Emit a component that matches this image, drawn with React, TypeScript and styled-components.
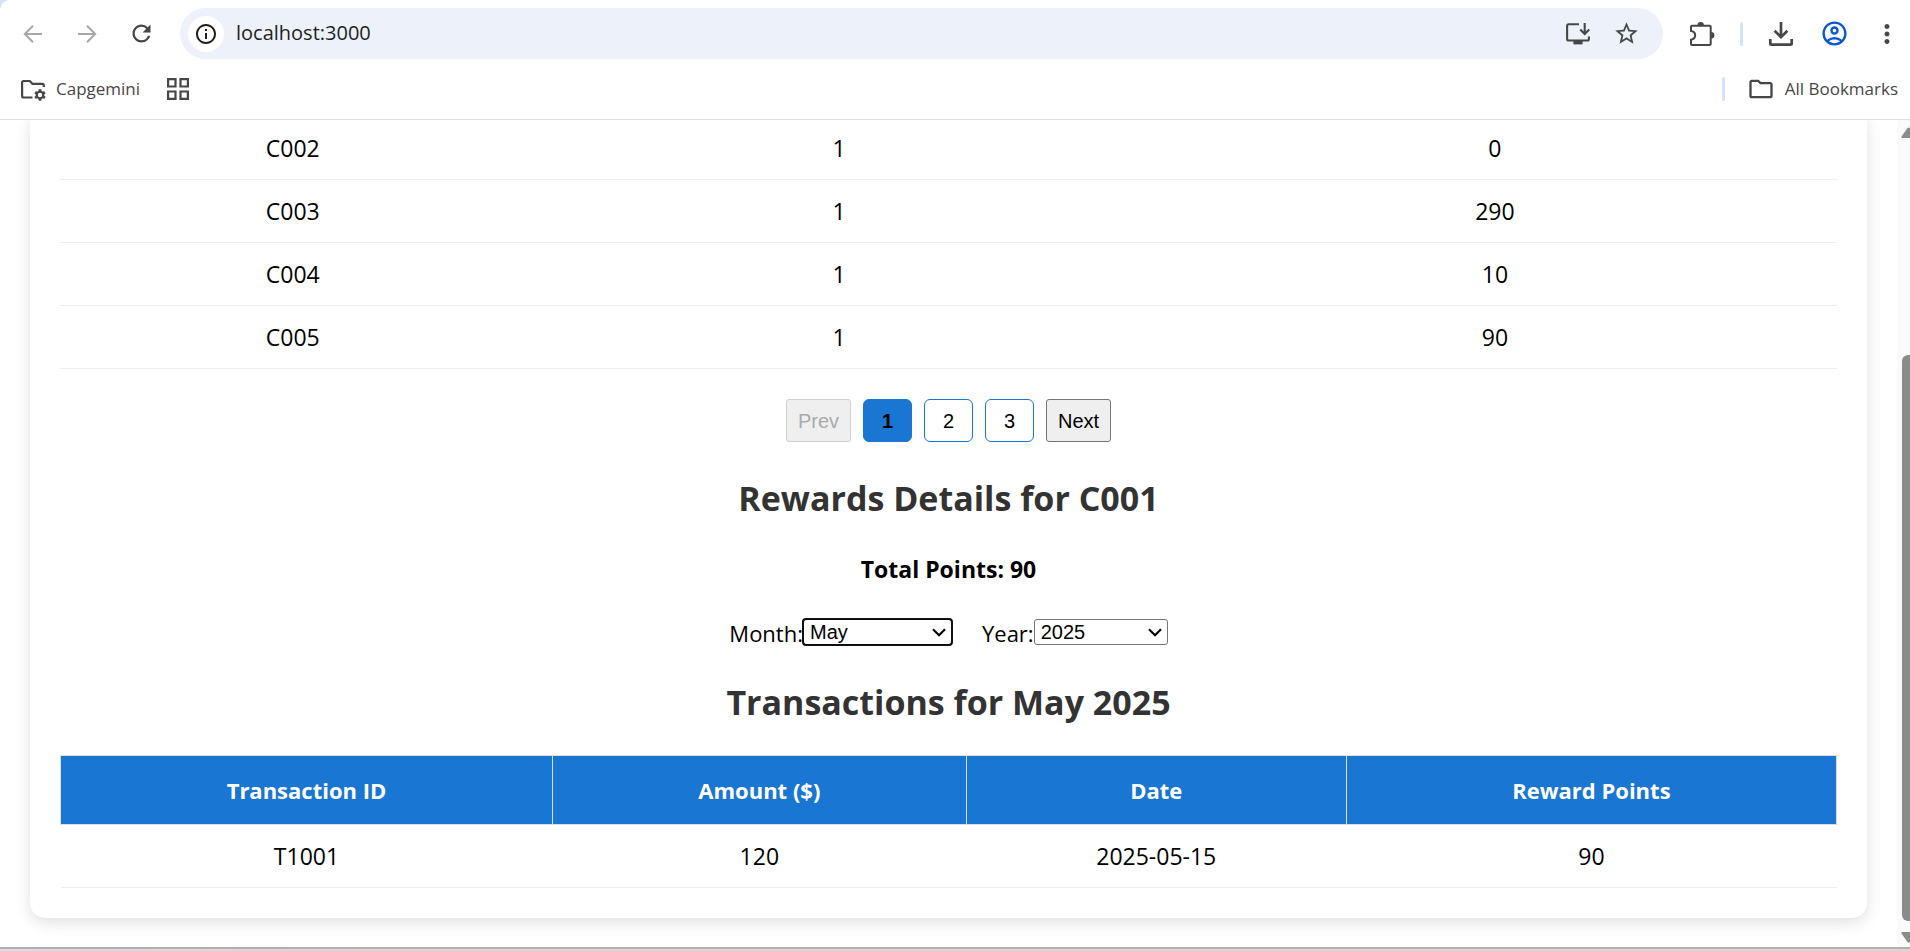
import React, { useState } from "react";
import styled, { createGlobalStyle } from "styled-components";
import {
  MdInfoOutline,
  MdMoreVert,
  MdOutlineAccountCircle,
  MdOutlineFolder,
  MdRefresh,
  MdStarBorder,
} from "react-icons/md";

const GlobalStyle = createGlobalStyle`
  *, *::before, *::after { box-sizing: border-box; }
  body {
    margin: 0;
    background: #d3e3fd;
    color: #000;
    font-family: "Open Sans", "Noto Sans", sans-serif;
    font-size: 23px;
    line-height: 32px;
  }
`;

const Window = styled.div`
  display: flex;
  flex-direction: column;
  height: 100vh;
  overflow: hidden;
`;

const Chrome = styled.header`
  flex: none;
  background: #fff;
  border-bottom: 1px solid #dfe0e2;
  border-top-left-radius: 10px;
  padding-bottom: 8px;
`;

const Toolbar = styled.div`
  display: flex;
  align-items: center;
  gap: 24px;
  height: 67px;
  padding: 0 8px 0 18px;
`;

const ToolGroup = styled.div`
  display: flex;
  align-items: center;
  gap: 23px;
`;

const IconButton = styled.button<{ $tone?: string }>`
  display: flex;
  flex: none;
  align-items: center;
  justify-content: center;
  width: 30px;
  height: 30px;
  padding: 0;
  border: 0;
  background: none;
  color: ${(p) => p.$tone ?? "#474747"};
`;

const Omnibox = styled.div`
  display: flex;
  flex: 1;
  align-items: center;
  gap: 12px;
  height: 51px;
  padding: 0 22px 0 8px;
  border-radius: 26px;
  background: #ecf1fa;
`;

const SiteInfo = styled(IconButton)`
  width: 36px;
  height: 36px;
  border-radius: 50%;
  background: #fff;
`;

const Address = styled.input`
  flex: 1;
  min-width: 0;
  height: 30px;
  padding: 0 0 2px;
  border: 0;
  outline: 0;
  background: none;
  color: #1f1f1f;
  font: 20px/28px "Open Sans", "Noto Sans", sans-serif;
`;

const OmniActions = styled.div`
  display: flex;
  gap: 18px;
`;

const Divider = styled.span`
  width: 3px;
  height: 24px;
  border-radius: 2px;
  background: #d3e3fd;
`;

const Bookmarks = styled.nav`
  display: flex;
  align-items: center;
  gap: 26px;
  height: 44px;
  padding: 0 12px 0 20px;
`;

const BookmarkButton = styled.button`
  display: flex;
  align-items: center;
  gap: 10px;
  padding: 0;
  border: 0;
  background: none;
  color: #474747;
  font: 17px/24px "Open Sans", "Noto Sans", sans-serif;
`;

const BookmarksEnd = styled.div`
  display: flex;
  align-items: center;
  gap: 22px;
  margin-left: auto;
`;

const Content = styled.div`
  display: flex;
  flex: 1;
  min-height: 0;
  background: #fff;
  border-bottom: 2px solid #b0b0b2;
`;

/* The page is scrolled to its end, so the card hangs from the bottom edge. */
const Page = styled.main`
  display: flex;
  flex: 1;
  flex-direction: column;
  justify-content: flex-end;
  overflow: hidden;
  padding: 0 30px 29px;
`;

const Card = styled.section`
  flex: none;
  padding: 0 30px 30px;
  border-radius: 0 0 15px 15px;
  background: #fff;
  box-shadow: 0 5px 15px rgba(0, 0, 0, 0.12);
`;

const Table = styled.table`
  width: 100%;
  border-collapse: collapse;
  table-layout: fixed;
  text-align: center;
`;

const Col = styled.col<{ $share: number }>`
  width: ${(p) => p.$share}%;
`;

const HeadCell = styled.th`
  height: 69px;
  padding: 0;
  border: 1px solid #ddd;
  background: #1976d2;
  color: #fff;
  font-size: 22px;
  font-weight: 700;
`;

const Cell = styled.td`
  height: 63px;
  padding: 0;
  border-bottom: 1px solid #eee;
`;

const Pagination = styled.nav`
  display: flex;
  justify-content: center;
  gap: 12px;
  margin: 30px 0 3px;
`;

const StepButton = styled.button`
  width: 65px;
  height: 43px;
  padding: 0;
  border: 1px solid #767676;
  border-radius: 3px;
  background: #efefef;
  color: #000;
  font: 20px/24px "Liberation Sans", Arial, sans-serif;

  &:disabled {
    border-color: #d0d0d0;
    color: #aaa;
  }
`;

const PageButton = styled(StepButton)<{ $active: boolean }>`
  width: 49px;
  border-color: #1976d2;
  border-radius: 6px;
  background: ${(p) => (p.$active ? "#1976d2" : "#fff")};
  font-weight: ${(p) => (p.$active ? 700 : 400)};
`;

const Title = styled.h2`
  margin: 0;
  padding: 29px 0;
  color: #333;
  font-size: 34px;
  font-weight: 700;
  line-height: 48px;
  text-align: center;
`;

const Total = styled.p`
  margin: 2px 0 0;
  font-weight: 700;
  text-align: center;
`;

const Filters = styled.div`
  display: flex;
  justify-content: center;
  gap: 30px;
  margin-top: 32px;
`;

const Field = styled.label`
  display: flex;
  align-items: center;
  font-size: 22px;
`;

const SelectBox = styled.span<{ $width: number }>`
  position: relative;
  display: flex;
  width: ${(p) => p.$width}px;
  padding-bottom: 2px;
`;

const Select = styled.select<{ $focused?: boolean }>`
  appearance: none;
  width: 100%;
  height: 26px;
  padding: 0 24px 0 6px;
  border: 1px solid #767676;
  border-radius: 3px;
  outline: ${(p) => (p.$focused ? "2px solid #101010" : "0")};
  outline-offset: -1px;
  background: #fff;
  color: #000;
  font: 20px/24px "Liberation Sans", Arial, sans-serif;
`;

const Arrow = styled.svg`
  position: absolute;
  top: 9px;
  right: 6px;
  pointer-events: none;
`;

const Scrollbar = styled.div`
  display: flex;
  flex: none;
  flex-direction: column;
  justify-content: space-between;
  align-items: flex-end;
  width: 13px;
  padding: 7px 0 4px;
  overflow: hidden;
  background: #fafafa;
  color: #8b8b89;
`;

const Track = styled.div`
  display: flex;
  flex: 1;
  flex-direction: column;
  justify-content: flex-end;
  width: 8px;
  padding: 8px 0 11px;
`;

const Thumb = styled.div`
  height: 73%;
  border-radius: 6px 0 0 6px;
  background: #8b8b89;
`;

const Taskbar = styled.div`
  flex: none;
  height: 2px;
  background: linear-gradient(90deg, #d9dcec, #d8d8d8 20%);
`;

type DrawingProps = { w?: number; h?: number; sw?: number; children: React.ReactNode };

const Drawing = ({ w = 24, h = 24, sw = 2, children }: DrawingProps) => (
  <svg width={w} height={h} viewBox={`0 0 ${w} ${h}`} fill="none" stroke="currentColor" strokeWidth={sw} aria-hidden="true">
    {children}
  </svg>
);

const BackIcon = () => (
  <Drawing>
    <path d="M21 12H4M12 3.8 3.8 12l8.2 8.2" />
  </Drawing>
);

const ForwardIcon = () => (
  <Drawing>
    <path d="M3 12h17M12 3.8l8.2 8.2-8.2 8.2" />
  </Drawing>
);

const InstallIcon = () => (
  <Drawing w={24} h={22} sw={2.1}>
    <path d="M13 1.2H2.6A1.500 1.500 0 0 0 1.100 2.700V16a1.500 1.500 0 0 0 1.500 1.500h18.800a1.500 1.500 0 0 0 1.500-1.500v-2.600" />
    <path d="M7.400 17.500h9.200V21.400H7.400z" fill="currentColor" stroke="none" />
    <path d="M18.700 0v10.600M14.200 6.400l4.500 4.600 4.500-4.600" />
  </Drawing>
);

const ExtensionIcon = () => (
  <Drawing w={26} h={26}>
    <path d="M3 4.700h17.700a1 1 0 0 1 1 1V23a1 1 0 0 1-1 1H3a1 1 0 0 1-1-1v-4.300c2.600-.3 4.200-2 4.200-4.400S4.600 10.200 2 9.900V5.700a1 1 0 0 1 1-1Z" />
    <path d="M8.500 4.200a3.200 3.200 0 0 1 6.400 0zM22.200 11.100a3.200 3.200 0 0 1 0 6.400z" fill="currentColor" stroke="none" />
  </Drawing>
);

const DownloadIcon = () => (
  <Drawing w={26} h={26} sw={2.700}>
    <path d="M13 1v15M6.600 9.800l6.400 6.400 6.400-6.400M2.300 18v4.700a1 1 0 0 0 1 1h19.400a1 1 0 0 0 1-1V18" />
  </Drawing>
);

const ManagedFolderIcon = () => (
  <Drawing w={26} h={24} sw={2.200}>
    <path d="M12.500 20.500H3.600a1.500 1.500 0 0 1-1.500-1.500V5.500A1.500 1.500 0 0 1 3.600 4h6.200l2.600 2.800h9.900a1.500 1.500 0 0 1 1.500 1.500V10" />
    <circle cx="20" cy="18" r="3.300" />
    <path
      d="M20 12.300v2.400M20 21.300v2.400M15.100 15.150l2 1.200M22.900 19.650l2 1.200M15.100 20.850l2-1.200M22.900 16.350l2-1.200"
      strokeWidth="2.800"
    />
  </Drawing>
);

const AppsIcon = () => (
  <Drawing sw={2.200}>
    <path d="M2.100 2.100h7.400v7.400H2.100zM14.500 2.100h7.400v7.400h-7.400zM2.100 14.500h7.400v7.400H2.100zM14.500 14.500h7.400v7.400h-7.400z" />
  </Drawing>
);

const SelectArrow = () => (
  <Arrow width="14" height="9" viewBox="0 0 14 9" fill="none" stroke="#000" strokeWidth="2.200" aria-hidden="true">
    <path d="m1 1.200 6 6 6-6" />
  </Arrow>
);

const customers = [
  { id: "C002", count: 1, points: 0 },
  { id: "C003", count: 1, points: 290 },
  { id: "C004", count: 1, points: 10 },
  { id: "C005", count: 1, points: 90 },
];

const transactions = [{ id: "T1001", amount: 120, date: "2025-05-15", points: 90 }];

export default function App() {
  const [page, setPage] = useState(1);
  const [month, setMonth] = useState("May");
  const [year, setYear] = useState("2025");

  return (
    <>
      <GlobalStyle />
      <Window>
        <Chrome>
          <Toolbar>
            <IconButton $tone="#a8a8a8" aria-label="Back"><BackIcon /></IconButton>
            <IconButton $tone="#a8a8a8" aria-label="Forward"><ForwardIcon /></IconButton>
            <IconButton aria-label="Reload"><MdRefresh size={27} /></IconButton>
            <Omnibox>
              <SiteInfo $tone="#1f1f1f" aria-label="Site information"><MdInfoOutline size={24} /></SiteInfo>
              <Address aria-label="Address" defaultValue="localhost:3000" />
              <OmniActions>
                <IconButton aria-label="Install app"><InstallIcon /></IconButton>
                <IconButton aria-label="Bookmark this tab"><MdStarBorder size={27} /></IconButton>
              </OmniActions>
            </Omnibox>
            <ToolGroup>
              <IconButton aria-label="Extensions"><ExtensionIcon /></IconButton>
              <Divider />
              <IconButton aria-label="Downloads"><DownloadIcon /></IconButton>
              <IconButton $tone="#0b57d0" aria-label="Profile"><MdOutlineAccountCircle size={29} /></IconButton>
              <IconButton aria-label="Menu"><MdMoreVert size={30} /></IconButton>
            </ToolGroup>
          </Toolbar>
          <Bookmarks aria-label="Bookmarks">
            <BookmarkButton><ManagedFolderIcon />Capgemini</BookmarkButton>
            <BookmarkButton aria-label="Apps"><AppsIcon /></BookmarkButton>
            <BookmarksEnd>
              <Divider />
              <BookmarkButton><MdOutlineFolder size={28} />All Bookmarks</BookmarkButton>
            </BookmarksEnd>
          </Bookmarks>
        </Chrome>

        <Content>
          <Page>
            <Card>
              <Table>
                <colgroup>
                  <Col $share={26.2} />
                  <Col $share={35.3} />
                  <Col $share={38.5} />
                </colgroup>
                <tbody>
                  {customers.map((c) => (
                    <tr key={c.id}>
                      <Cell>{c.id}</Cell>
                      <Cell>{c.count}</Cell>
                      <Cell>{c.points}</Cell>
                    </tr>
                  ))}
                </tbody>
              </Table>

              <Pagination aria-label="Pages">
                <StepButton disabled={page === 1} onClick={() => setPage(page - 1)}>Prev</StepButton>
                {[1, 2, 3].map((n) => (
                  <PageButton key={n} $active={n === page} onClick={() => setPage(n)}>{n}</PageButton>
                ))}
                <StepButton disabled={page === 3} onClick={() => setPage(page + 1)}>Next</StepButton>
              </Pagination>

              <Title>Rewards Details for C001</Title>
              <Total>Total Points: 90</Total>

              <Filters>
                <Field>
                  Month:
                  <SelectBox $width={149}>
                    <Select $focused value={month} onChange={(e) => setMonth(e.target.value)}>
                      <option>May</option>
                    </Select>
                    <SelectArrow />
                  </SelectBox>
                </Field>
                <Field>
                  Year:
                  <SelectBox $width={134}>
                    <Select value={year} onChange={(e) => setYear(e.target.value)}>
                      <option>2025</option>
                    </Select>
                    <SelectArrow />
                  </SelectBox>
                </Field>
              </Filters>

              <Title>Transactions for {month} {year}</Title>

              <Table>
                <colgroup>
                  <Col $share={27.7} />
                  <Col $share={23.3} />
                  <Col $share={21.4} />
                  <Col $share={27.6} />
                </colgroup>
                <thead>
                  <tr>
                    <HeadCell>Transaction ID</HeadCell>
                    <HeadCell>Amount ($)</HeadCell>
                    <HeadCell>Date</HeadCell>
                    <HeadCell>Reward Points</HeadCell>
                  </tr>
                </thead>
                <tbody>
                  {transactions.map((t) => (
                    <tr key={t.id}>
                      <Cell>{t.id}</Cell>
                      <Cell>{t.amount}</Cell>
                      <Cell>{t.date}</Cell>
                      <Cell>{t.points}</Cell>
                    </tr>
                  ))}
                </tbody>
              </Table>
            </Card>
          </Page>
          <Scrollbar aria-hidden="true">
            <svg width="9" height="11" viewBox="0 0 9 11" fill="currentColor">
              <path d="M1.500 11a1 1 0 0 1-1-1.500L6.500 1a2 2 0 0 1 2.500 0v10z" />
            </svg>
            <Track><Thumb /></Track>
            <svg width="9" height="11" viewBox="0 0 9 11" fill="currentColor">
              <path d="M1.500 0a1 1 0 0 0-1 1.500L6.500 10a2 2 0 0 0 2.500 0V0z" />
            </svg>
          </Scrollbar>
        </Content>
        <Taskbar />
      </Window>
    </>
  );
}
